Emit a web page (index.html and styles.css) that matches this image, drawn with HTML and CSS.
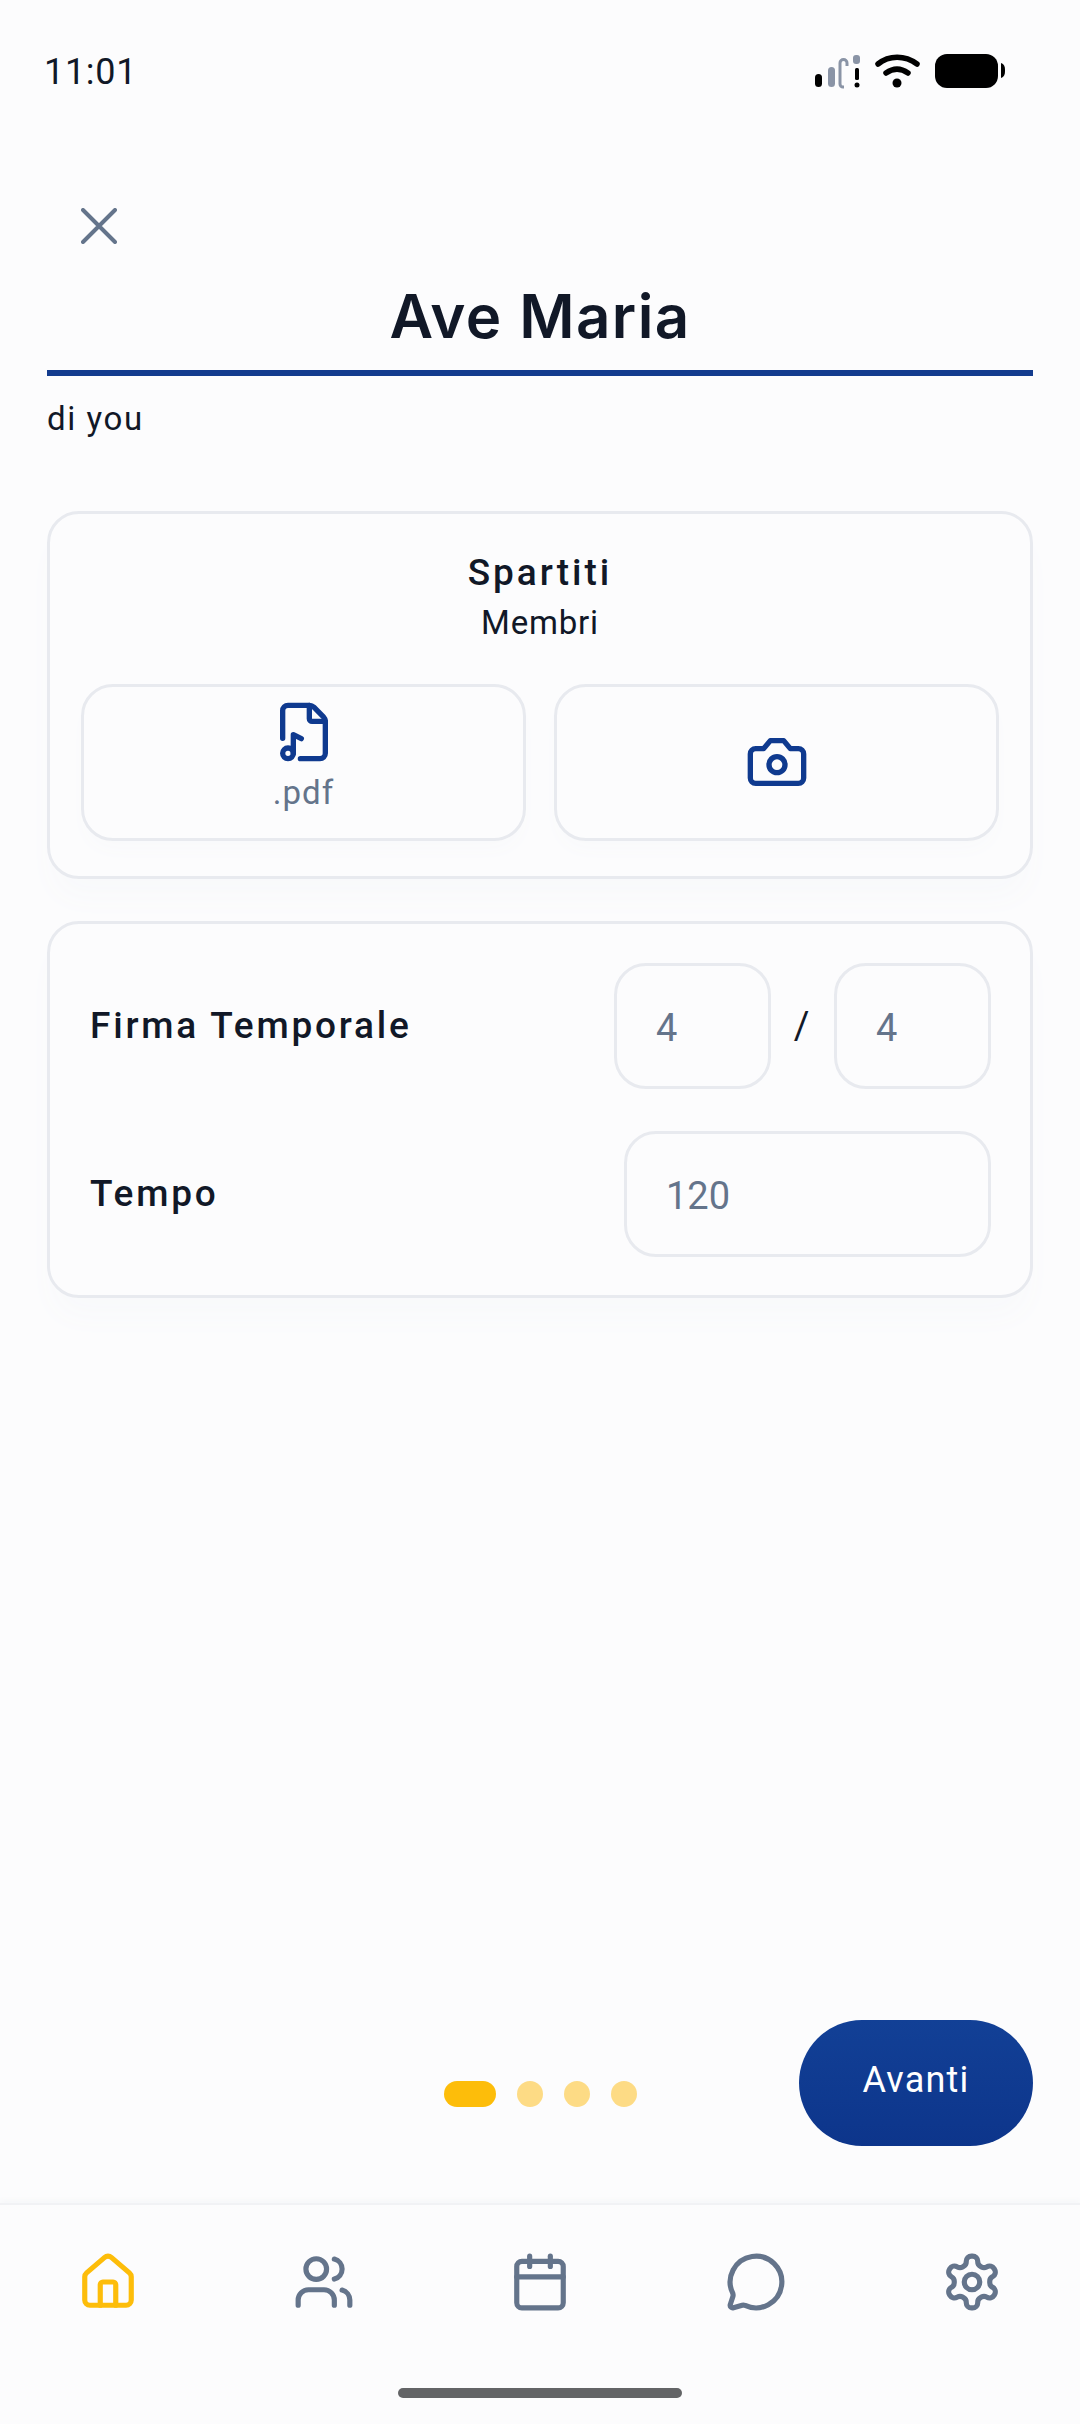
FILE: index.html
```html
<!DOCTYPE html>
<html lang="it">
<head>
    <meta charset="UTF-8">
    <title>Ave Maria</title>
    <link rel="stylesheet" href="styles.css">
</head>
<body>
<div class="status">
    <span class="time">11:01</span>
    <svg class="status-icons" width="200" height="42" viewBox="810 50 200 42">
        <rect x="815" y="74" width="7" height="13" rx="3.5" fill="#000"/>
        <rect x="828" y="67" width="7" height="20" rx="3.5" fill="#8a94a6"/>
        <path d="M847 66v-3a3.5 3.5 0 0 0-7 0v21a3 3 0 0 0 3 3h1" fill="none" stroke="#8a94a6" stroke-width="3"/>
        <rect x="853" y="55" width="7" height="9" rx="3" fill="#8a94a6"/>
        <rect x="855" y="68" width="4" height="12" rx="1.5" fill="#000"/>
        <circle cx="857" cy="85" r="2.5" fill="#000"/>
        <path d="M878 64c11-9 27-9 39 0" fill="none" stroke="#000" stroke-width="5.5" stroke-linecap="round"/>
        <path d="M886 73c7-5 15-5 22 0" fill="none" stroke="#000" stroke-width="5.5" stroke-linecap="round"/>
        <circle cx="897" cy="83" r="4.5" fill="#000"/>
        <rect x="935" y="54" width="63" height="34" rx="12" fill="#000"/>
        <path d="M1001 63c3 1 4 3 4 7.500s-1 6.500-4 7.500z" fill="#000"/>
    </svg>
</div>

<div class="head">
    <button class="close">
        <svg width="36" height="36" viewBox="0 0 36 36" fill="none" stroke="#64748b" stroke-width="4" stroke-linecap="round"><path d="M2 2l32 32M34 2L2 34"/></svg>
    </button>
    <h1 class="title">Ave Maria</h1>
    <div class="author">di you</div>
</div>

<div class="main">
    <div class="card card-score">
        <div class="card-title">Spartiti</div>
        <div class="card-sub">Membri</div>
        <div class="uploads">
            <div class="upload upload-pdf">
                <svg width="64" height="64" viewBox="0 0 24 24" fill="none" stroke="#0f3a8f" stroke-width="2" stroke-linecap="round" stroke-linejoin="round">
                    <path d="M10.65 22H18a2 2 0 0 0 2-2V8a2.400 2.400 0 0 0-.706-1.706l-3.588-3.588A2.400 2.400 0 0 0 14 2H6a2 2 0 0 0-2 2v10.350"/>
                    <path d="M14 2v5a1 1 0 0 0 1 1h5"/>
                    <path d="M8 20v-7l3 1.474"/>
                    <circle cx="6" cy="20" r="2"/>
                </svg>
                <span class="upload-label">.pdf</span>
            </div>
            <div class="upload">
                <svg width="64" height="64" viewBox="0 0 24 24" fill="none" stroke="#0f3a8f" stroke-width="2" stroke-linecap="round" stroke-linejoin="round">
                    <path d="M14.500 4h-5L7 7H4a2 2 0 0 0-2 2v9a2 2 0 0 0 2 2h16a2 2 0 0 0 2-2V9a2 2 0 0 0-2-2h-3l-2.500-3z"/>
                    <circle cx="12" cy="13" r="3"/>
                </svg>
            </div>
        </div>
    </div>

    <div class="card card-fields">
        <div class="row">
            <span class="row-label">Firma Temporale</span>
            <div class="signature">
                <div class="field field-small">4</div>
                <span class="slash">/</span>
                <div class="field field-small">4</div>
            </div>
        </div>
        <div class="row">
            <span class="row-label">Tempo</span>
            <div class="field field-wide">120</div>
        </div>
    </div>
</div>

<div class="actions">
    <span></span>
    <div class="dots">
        <span class="dot dot-active"></span>
        <span class="dot"></span>
        <span class="dot"></span>
        <span class="dot"></span>
    </div>
    <button class="next">Avanti</button>
</div>

<div class="nav">
    <div class="nav-item">
        <svg width="62" height="62" viewBox="0 0 24 24" fill="none" stroke="#fdbd0a" stroke-width="2" stroke-linecap="round" stroke-linejoin="round">
            <path d="M15 21v-8a1 1 0 0 0-1-1h-4a1 1 0 0 0-1 1v8"/>
            <path d="M3 10a2 2 0 0 1 .709-1.528l7-5.999a2 2 0 0 1 2.582 0l7 5.999A2 2 0 0 1 21 10v9a2 2 0 0 1-2 2H5a2 2 0 0 1-2-2z"/>
        </svg>
    </div>
    <div class="nav-item">
        <svg width="62" height="62" viewBox="0 0 24 24" fill="none" stroke="#64748b" stroke-width="2" stroke-linecap="round" stroke-linejoin="round">
            <path d="M16 21v-2a4 4 0 0 0-4-4H6a4 4 0 0 0-4 4v2"/>
            <circle cx="9" cy="7" r="4"/>
            <path d="M22 21v-2a4 4 0 0 0-3-3.870"/>
            <path d="M16 3.130a4 4 0 0 1 0 7.750"/>
        </svg>
    </div>
    <div class="nav-item">
        <svg width="62" height="62" viewBox="0 0 24 24" fill="none" stroke="#64748b" stroke-width="2" stroke-linecap="round" stroke-linejoin="round">
            <path d="M8 2v4"/>
            <path d="M16 2v4"/>
            <rect x="3" y="4" width="18" height="18" rx="2"/>
            <path d="M3 10h18"/>
        </svg>
    </div>
    <div class="nav-item">
        <svg width="62" height="62" viewBox="0 0 24 24" fill="none" stroke="#64748b" stroke-width="2" stroke-linecap="round" stroke-linejoin="round">
            <path d="M2.992 16.342a2 2 0 0 1 .094 1.167l-1.065 3.290a1 1 0 0 0 1.236 1.168l3.413-.998a2 2 0 0 1 1.099.092 10 10 0 1 0-4.777-4.719"/>
        </svg>
    </div>
    <div class="nav-item">
        <svg width="62" height="62" viewBox="0 0 24 24" fill="none" stroke="#64748b" stroke-width="2" stroke-linecap="round" stroke-linejoin="round">
            <path d="M12.220 2h-.44a2 2 0 0 0-2 2v.18a2 2 0 0 1-1 1.730l-.43.25a2 2 0 0 1-2 0l-.15-.08a2 2 0 0 0-2.730.73l-.22.38a2 2 0 0 0 .73 2.730l.15.1a2 2 0 0 1 1 1.720v.51a2 2 0 0 1-1 1.740l-.15.09a2 2 0 0 0-.73 2.730l.22.38a2 2 0 0 0 2.730.73l.15-.08a2 2 0 0 1 2 0l.43.25a2 2 0 0 1 1 1.730V20a2 2 0 0 0 2 2h.44a2 2 0 0 0 2-2v-.18a2 2 0 0 1 1-1.730l.43-.25a2 2 0 0 1 2 0l.15.08a2 2 0 0 0 2.730-.73l.22-.39a2 2 0 0 0-.73-2.730l-.15-.08a2 2 0 0 1-1-1.740v-.5a2 2 0 0 1 1-1.740l.15-.09a2 2 0 0 0 .73-2.730l-.22-.38a2 2 0 0 0-2.730-.73l-.15.08a2 2 0 0 1-2 0l-.43-.25a2 2 0 0 1-1-1.730V4a2 2 0 0 0-2-2z"/>
            <circle cx="12" cy="12" r="3"/>
        </svg>
    </div>
</div>

<div class="home-bar"><span class="home-pill"></span></div>
</body>
</html>
```

FILE: styles.css
```css
* {
    box-sizing: border-box;
}
body {
    margin: 0;
    width: 1080px;
    height: 2424px;
    display: flex;
    flex-direction: column;
    background-color: #fcfcfd;
    color: #111827;
    font-family: Roboto, "Noto Sans", sans-serif;
    overflow: hidden;
}
svg {
    display: block;
}
button {
    border: none;
    padding: 0;
    background: none;
    font-family: inherit;
}

.status {
    height: 208px;
    padding: 48px 70px 0 44px;
    display: flex;
    justify-content: space-between;
    align-items: flex-start;
}
.time {
    font-family: Roboto, sans-serif;
    font-size: 36px;
    line-height: 48px;
    letter-spacing: 0.7px;
}
.status-icons {
    margin-top: 2px;
}

.head {
    padding: 0 47px;
}
.close {
    display: block;
    margin: 0 0 0 34px;
    height: 36px;
}
.title {
    margin: 0;
    height: 132px;
    padding-top: 37px;
    border-bottom: 6px solid #133c8e;
    font-family: Inter, sans-serif;
    font-size: 60px;
    line-height: 70px;
    font-weight: 600;
    letter-spacing: 1.400px;
    text-align: center;
}
.author {
    margin-top: 22px;
    font-size: 33px;
    line-height: 42px;
    letter-spacing: 1.600px;
}

.main {
    flex: 1;
    padding: 71px 47px 0;
    display: flex;
    flex-direction: column;
    gap: 42px;
}
.card {
    border: 3px solid #e8eaef;
    border-radius: 32px;
    box-shadow: 0 24px 30px -6px #f8f9fb;
}
.card-score {
    height: 368px;
    padding: 36px 31px 0;
    text-align: center;
}
.card-title {
    font-size: 37px;
    line-height: 46px;
    font-weight: 500;
    letter-spacing: 3px;
}
.card-sub {
    margin-top: 7px;
    font-size: 33px;
    line-height: 40px;
    letter-spacing: 0.800px;
}
.uploads {
    margin-top: 41px;
    display: grid;
    grid-template-columns: 1fr 1fr;
    gap: 28px;
}
.upload {
    height: 157px;
    padding-bottom: 2px;
    border: 3px solid #e8eaef;
    border-radius: 32px;
    box-shadow: 0 12px 20px -6px #f8f9fb;
    display: flex;
    flex-direction: column;
    align-items: center;
    justify-content: center;
}
.upload-pdf {
    gap: 11px;
    padding-bottom: 15px;
}
.upload-label {
    font-size: 33px;
    line-height: 36px;
    letter-spacing: 1px;
    color: #64748b;
}

.card-fields {
    height: 377px;
    padding: 39px 39px 0 40px;
    display: flex;
    flex-direction: column;
    gap: 42px;
}
.row {
    display: flex;
    justify-content: space-between;
    align-items: center;
}
.row-label {
    font-size: 37px;
    font-weight: 500;
    letter-spacing: 2.800px;
    padding-bottom: 2px;
}
.signature {
    display: flex;
    align-items: center;
}
.slash {
    width: 63px;
    padding-right: 2px;
    font-size: 38px;
    text-align: center;
}
.field {
    height: 126px;
    padding: 3px 0 0 39px;
    border: 3px solid #e8eaef;
    border-radius: 32px;
    display: flex;
    align-items: center;
    font-family: Roboto, sans-serif;
    font-size: 38px;
    color: #64748b;
}
.field-small {
    width: 157px;
}
.field-wide {
    width: 367px;
}

.actions {
    height: 183px;
    padding: 0 47px;
    display: grid;
    grid-template-columns: 1fr auto 1fr;
    align-items: start;
}
.dots {
    margin-top: 61px;
    display: flex;
    gap: 21px;
}
.dot {
    width: 26px;
    height: 26px;
    border-radius: 13px;
    background-color: #fddb85;
}
.dot-active {
    width: 52px;
    background-color: #fdbd0a;
}
.next {
    justify-self: end;
    width: 234px;
    height: 126px;
    padding-bottom: 6px;
    border-radius: 63px;
    background: linear-gradient(#124096, #0d358b);
    color: #fff;
    font-size: 36px;
    letter-spacing: 1.200px;
}

.nav {
    height: 150px;
    padding-top: 5px;
    border-top: 2px solid #f1f2f5;
    box-shadow: 0 -3px 5px #f6f7f9;
    display: grid;
    grid-template-columns: repeat(5, 1fr);
    align-items: center;
}
.nav-item {
    display: flex;
    justify-content: center;
}
.home-bar {
    height: 71px;
    display: flex;
    justify-content: center;
    padding-top: 35px;
}
.home-pill {
    width: 284px;
    height: 10px;
    border-radius: 5px;
    background-color: #636466;
}
```
